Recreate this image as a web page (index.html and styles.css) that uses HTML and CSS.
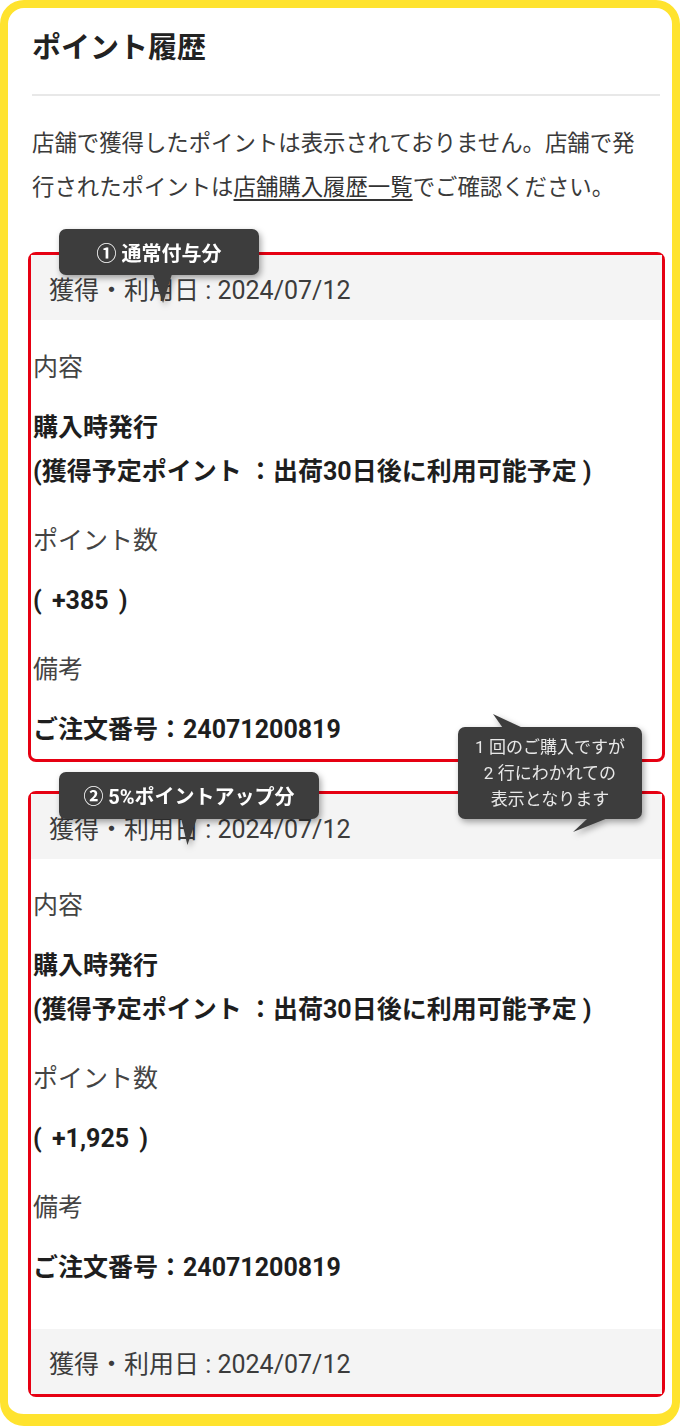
FILE: index.html
```html
<!DOCTYPE html>
<html lang="ja">
<head>
<meta charset="utf-8">
<title>ポイント履歴</title>
<link rel="stylesheet" href="styles.css">
</head>
<body>
<div class="frame">
  <h1 class="title">ポイント履歴</h1>
  <div class="divider"></div>
  <p class="note">店舗で獲得したポイントは表示されておりません。店舗で発<br>行されたポイントは<a class="link">店舗購入履歴一覧</a>でご確認ください。</p>

  <div class="record record-first">
    <div class="record-date">獲得・利用日 : 2024/07/12</div>
    <div class="record-body">
      <div class="label">内容</div>
      <div class="value">購入時発行<br>(獲得予定ポイント ：出荷30日後に利用可能予定 )</div>
      <div class="label">ポイント数</div>
      <div class="value value-points">( +385 )</div>
      <div class="label">備考</div>
      <div class="value">ご注文番号：24071200819</div>
    </div>
    <div class="tip tip-one">① 通常付与分</div>
    <div class="tip tip-note">1 回のご購入ですが<br>2 行にわかれての<br>表示となります</div>
  </div>

  <div class="record record-second">
    <div class="record-date">獲得・利用日 : 2024/07/12</div>
    <div class="record-body">
      <div class="label">内容</div>
      <div class="value">購入時発行<br>(獲得予定ポイント ：出荷30日後に利用可能予定 )</div>
      <div class="label">ポイント数</div>
      <div class="value value-points">( +1,925 )</div>
      <div class="label">備考</div>
      <div class="value">ご注文番号：24071200819</div>
    </div>
    <div class="record-date">獲得・利用日 : 2024/07/12</div>
    <div class="tip tip-two">② 5%ポイントアップ分</div>
  </div>
</div>
</body>
</html>
```

FILE: styles.css
```css
* { box-sizing: border-box; }

html, body {
  margin: 0;
  padding: 0;
  background: #ffffff;
}

body {
  font-family: Roboto, "Noto Sans CJK JP", sans-serif;
  color: #333333;
}

.frame {
  position: relative;
  width: 680px;
  height: 1426px;
  border: 8px solid #ffe32e;
  border-bottom-width: 12px;
  border-radius: 24px;
  background: #ffffff;
  padding: 20px 12px 0 24px;
}

.title {
  margin: 0;
  font-size: 29px;
  line-height: 40px;
  font-weight: 700;
  color: #222222;
}

.divider {
  margin-top: 26px;
  height: 2px;
  background: #e8e8e8;
}

.note {
  margin: 25px 0 0 0;
  font-size: 22.4px;
  line-height: 44px;
  color: #3a3a3a;
  white-space: nowrap;
}

.link {
  color: #333333;
  text-decoration: underline;
  text-underline-offset: 4px;
  text-decoration-thickness: 1.5px;
}

.record {
  position: relative;
  margin: 43px -5px 0 -4px;
  border: 3px solid #e60012;
  border-radius: 8px;
}

.record-second {
  margin-top: 29px;
}

.record-date {
  display: flex;
  align-items: center;
  height: 65px;
  padding-left: 18px;
  background: #f4f4f4;
  font-size: 25px;
  color: #3c3c3c;
}

.record-body {
  padding: 26px 0 7px 2px;
}

.record-second .record-body {
  padding-top: 25px;
  padding-bottom: 39px;
}

.label {
  font-size: 25px;
  line-height: 44px;
  color: #444444;
  margin-bottom: 16px;
}

.value {
  font-size: 25px;
  line-height: 44px;
  font-weight: 700;
  color: #1e1e1e;
  margin-bottom: 25px;
}

.value-points {
  word-spacing: 4px;
}

.value:last-child {
  margin-bottom: 0;
}

.tip {
  position: absolute;
  z-index: 2;
  background: #3d3d3d;
  color: #ffffff;
  border-radius: 7px;
  filter: drop-shadow(2px 3px 3px rgba(0, 0, 0, 0.35));
}

.tip-one,
.tip-two {
  display: flex;
  align-items: center;
  justify-content: center;
  font-size: 20px;
  font-weight: 700;
}

.tip-one {
  left: 28px;
  top: -26px;
  width: 200px;
  height: 46px;
}

.tip-one::after {
  content: "";
  position: absolute;
  left: 94px;
  top: 45px;
  width: 19px;
  height: 29px;
  background: #3d3d3d;
  clip-path: polygon(0 0, 100% 0, 53% 100%);
}

.tip-two {
  left: 28px;
  top: -22px;
  width: 260px;
  height: 47px;
}

.tip-two::after {
  content: "";
  position: absolute;
  left: 122px;
  top: 46px;
  width: 16px;
  height: 27px;
  background: #3d3d3d;
  clip-path: polygon(0 0, 100% 0, 40% 100%);
}

.tip-note {
  left: 427px;
  top: 472px;
  width: 184px;
  height: 92px;
  padding: 7px 0;
  font-size: 17px;
  line-height: 26px;
  text-align: center;
  color: #e8e8e8;
}

.tip-note::before {
  content: "";
  position: absolute;
  left: 35px;
  top: -13px;
  width: 30px;
  height: 14px;
  background: #3d3d3d;
  clip-path: polygon(0 0, 33% 100%, 100% 100%);
}

.tip-note::after {
  content: "";
  position: absolute;
  left: 115px;
  top: 91px;
  width: 35px;
  height: 14px;
  background: #3d3d3d;
  clip-path: polygon(43% 0, 100% 0, 0 100%);
}
```
